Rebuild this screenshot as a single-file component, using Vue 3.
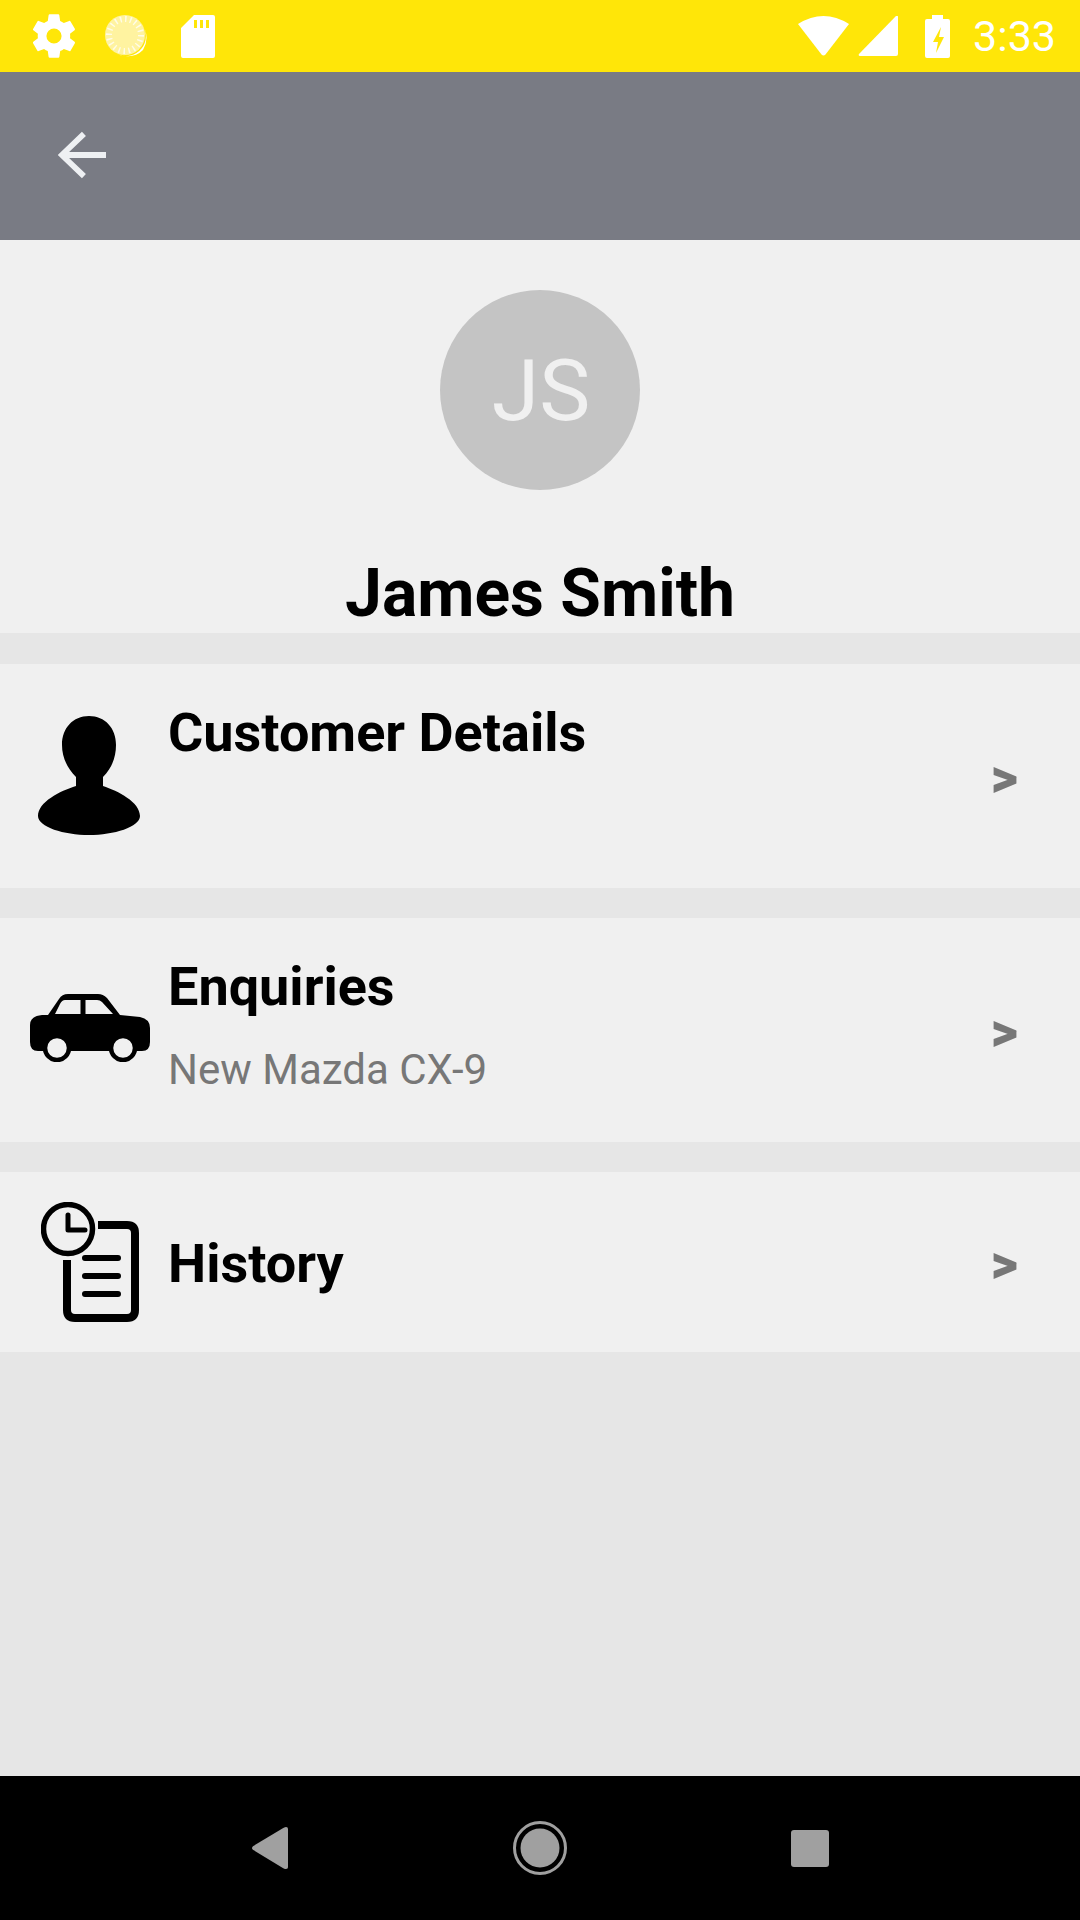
<template>
  <div class="screen">
    <header class="status">
      <div class="status-left">
        <svg class="ic-gear" viewBox="0 0 24 24"><path fill="#fff" d="M19.4 13c.04-.33.06-.66.06-1s-.02-.67-.06-1l2.1-1.65c.2-.15.25-.42.12-.64l-2-3.46c-.12-.22-.39-.3-.6-.22l-2.49 1c-.52-.4-1.08-.73-1.69-.98l-.38-2.65A.49.49 0 0 0 14 2h-4c-.25 0-.46.18-.49.42l-.38 2.65c-.61.25-1.17.59-1.69.98l-2.49-1a.5.5 0 0 0-.6.22l-2 3.46c-.13.22-.07.49.12.64L4.57 11c-.04.33-.07.67-.07 1s.03.67.07 1l-2.11 1.65c-.19.15-.25.42-.12.64l2 3.46c.12.22.39.3.6.22l2.49-1c.52.4 1.08.73 1.69.98l.38 2.65c.03.24.24.42.49.42h4c.25 0 .46-.18.49-.42l.38-2.65c.61-.25 1.17-.59 1.69-.98l2.49 1c.23.08.48 0 .6-.22l2-3.46c.12-.22.07-.49-.12-.64zM12 15.500a3.500 3.500 0 1 1 0-7 3.500 3.500 0 0 1 0 7z"/></svg>
        <svg class="ic-lemon" viewBox="0 0 42 42">
          <circle cx="20" cy="20" r="20" fill="#fff3a0"/>
          <path d="M36 8a20 20 0 0 1-24 31q16 6 26-4 8-14-2-27z" fill="#fff"/>
          <circle cx="20" cy="20" r="16" fill="none" stroke="#fff" stroke-width="6" stroke-dasharray="1.500 3.500" opacity=".75"/>
        </svg>
        <svg class="ic-sd" viewBox="0 0 34 43"><path fill="#fff" fill-rule="evenodd" d="M13 0h19a2 2 0 0 1 2 2v39a2 2 0 0 1-2 2H2a2 2 0 0 1-2-2V13zM13 5v8h3V5zM19 5v8h3V5zM25 5v8h3V5z"/></svg>
      </div>
      <div class="status-right">
        <svg class="ic-wifi" viewBox="0 0 51 40"><path fill="#fff" d="M0 8Q25.500-8 51 8L27.500 38.500q-2 2-4 0z"/></svg>
        <svg class="ic-signal" viewBox="0 0 40 40"><path fill="#fff" d="M40 1v37a2 2 0 0 1-2 2H2q-2 0-1-2L38 0q2-1 2 1z"/></svg>
        <svg class="ic-battery" viewBox="0 0 25 43"><path fill="#fff" fill-rule="evenodd" d="M7 0h11v4h5a2 2 0 0 1 2 2v35a2 2 0 0 1-2 2H2a2 2 0 0 1-2-2V6a2 2 0 0 1 2-2h5zM16 12 8 27h5l-2 11 8-16h-5z"/></svg>
        <span class="clock">3:33</span>
      </div>
    </header>

    <nav class="toolbar">
      <svg class="ic-back" viewBox="0 0 50 50"><path fill="none" stroke="#eef0f3" stroke-width="6" d="M50 25H5M27 3 4 25l23 22"/></svg>
    </nav>

    <section class="profile">
      <div class="avatar">JS</div>
      <h1 class="name">James Smith</h1>
    </section>

    <main class="list">
      <div class="row row-tall">
        <div class="icon-slot">
          <svg class="ic-person" viewBox="0 0 102 120"><path d="M51 1C67 1 78 13 78 30 78 42 74 53 65 62V71C80 76 102 87 102 101 102 112 76 120 51 120S0 112 0 101C0 87 22 76 38 71V62C29 53 24 42 24 30 24 13 35 1 51 1Z"/></svg>
        </div>
        <div class="row-body">
          <div class="row-title top">Customer Details</div>
        </div>
        <span class="chev">&gt;</span>
      </div>

      <div class="row row-tall">
        <div class="icon-slot">
          <svg class="ic-car" viewBox="0 0 120 68">
            <path fill-rule="evenodd" d="M18 21 29 5Q32 0 38 0H68Q73 0 77 4L90 21 110 23Q120 25 120 34V48Q120 57 112 57H8Q0 57 0 48V31Q0 22 12 21ZM25 20H50.500V6H35Q32 6 30 10ZM55.500 6V20H83L72 8Q70 6 67 6Z"/>
            <circle cx="27" cy="54" r="12" fill="#f0f0f0" stroke="#000" stroke-width="4.500"/>
            <circle cx="93" cy="54" r="12" fill="#f0f0f0" stroke="#000" stroke-width="4.500"/>
          </svg>
        </div>
        <div class="row-body">
          <div class="row-title enq">Enquiries</div>
          <div class="row-sub">New Mazda CX-9</div>
        </div>
        <span class="chev">&gt;</span>
      </div>

      <div class="row row-short">
        <div class="icon-slot">
          <svg class="ic-history" viewBox="0 0 100 122" fill="none" stroke="#000">
            <circle cx="27" cy="27" r="24.500" stroke-width="5.500"/>
            <path d="M27 13V28H44" stroke-width="5" stroke-linecap="round" stroke-linejoin="round"/>
            <path d="M57 23H86Q94 23 94 31V108Q94 116 86 116H34Q26 116 26 108V58" stroke-width="8"/>
            <path d="M44 56H77M44 74H77M44 92H77" stroke-width="6" stroke-linecap="round"/>
          </svg>
        </div>
        <div class="row-body">
          <div class="row-title">History</div>
        </div>
        <span class="chev">&gt;</span>
      </div>
    </main>

    <footer class="navbar">
      <svg class="ic-nav-back" viewBox="0 0 38 48" preserveAspectRatio="none"><path fill="#a0a0a0" d="M36 0q2 0 2 2v44q0 2-2 2-1 0-3-1L1 26q-2-2 0-4L33 1q2-1 3-1z"/></svg>
      <svg class="ic-nav-home" viewBox="0 0 54 54"><circle cx="27" cy="27" r="25.500" fill="none" stroke="#a0a0a0" stroke-width="3"/><circle cx="27" cy="27" r="19.500" fill="#a0a0a0"/></svg>
      <div class="nav-square"></div>
    </footer>
  </div>
</template>

<script setup>
</script>

<style>
html, body { margin: 0; padding: 0; background: #e6e6e6; }
</style>

<style scoped>
.screen {
  width: 1080px;
  height: 1920px;
  display: flex;
  flex-direction: column;
  background: #e6e6e6;
  font-family: Roboto, "Liberation Sans", sans-serif;
  overflow: hidden;
}
.status {
  height: 72px;
  flex: none;
  background: #ffe608;
  display: flex;
  align-items: center;
  justify-content: space-between;
  padding: 0 24px 0 28px;
}
.status-left, .status-right { display: flex; align-items: center; }
.ic-gear { width: 52px; height: 52px; }
.ic-lemon { width: 42px; height: 42px; margin-left: 25px; }
.ic-sd { width: 34px; height: 43px; margin-left: 34px; }
.ic-wifi { width: 51px; height: 40px; }
.ic-signal { width: 40px; height: 40px; margin-left: 9px; }
.ic-battery { width: 25px; height: 43px; margin-left: 27px; }
.clock { font-size: 43px; color: #fff; margin-left: 23px; line-height: 1; }

.toolbar {
  height: 168px;
  flex: none;
  background: #797b84;
  display: flex;
  align-items: center;
  padding-left: 58px;
}
.ic-back { width: 48px; height: 48px; margin-top: -2px; }

.profile {
  height: 393px;
  flex: none;
  background: #f0f0f0;
  display: flex;
  flex-direction: column;
  align-items: center;
  padding-top: 50px;
  box-sizing: border-box;
}
.avatar {
  width: 200px;
  height: 200px;
  border-radius: 50%;
  background: #c4c4c4;
  color: #f0f0f0;
  font-size: 86px;
  font-weight: 400;
  display: flex;
  align-items: center;
  justify-content: center;
  padding-left: 2px;
  box-sizing: border-box;
}
.name {
  margin: 66px 0 0;
  font-size: 66px;
  line-height: 76px;
  font-weight: 700;
  color: #000;
}

.list {
  padding-top: 31px;
  display: flex;
  flex-direction: column;
  gap: 30px;
}
.row {
  background: #f0f0f0;
  display: flex;
  align-items: center;
}
.row-tall { height: 224px; }
.row-short { height: 180px; }
.icon-slot {
  width: 168px;
  flex: none;
  display: flex;
  justify-content: center;
  align-items: center;
  padding-left: 10px;
  box-sizing: border-box;
}
.ic-person { width: 102px; height: 120px; margin-top: -3px; }
.ic-car { width: 120px; height: 68px; margin-top: -4px; margin-left: 2px; }
.ic-history { width: 100px; height: 122px; margin-top: 2px; margin-left: 4px; }
.row-body { flex: 1; align-self: stretch; display: flex; flex-direction: column; justify-content: center; }
.row-title { font-size: 54px; line-height: 62px; font-weight: 700; color: #000; margin-top: 4px; }
.row-title.top { margin: 0 0 87px; }
.row-title.enq { margin-top: 0; }
.row-sub { font-size: 42px; line-height: 48px; color: #777; margin-top: 28px; margin-bottom: 10px; }
.chev { font-size: 53px; font-weight: 900; color: #777; margin-right: 62px; margin-top: 4px; line-height: 1; }

.navbar {
  margin-top: auto;
  height: 144px;
  flex: none;
  background: #000;
  display: flex;
  align-items: center;
  padding-left: 252px;
}
.ic-nav-back { width: 36px; height: 42px; }
.ic-nav-home { width: 54px; height: 54px; margin-left: 225px; }
.nav-square { width: 38px; height: 37px; background: #a0a0a0; border-radius: 3px; margin-left: 224px; }
</style>
